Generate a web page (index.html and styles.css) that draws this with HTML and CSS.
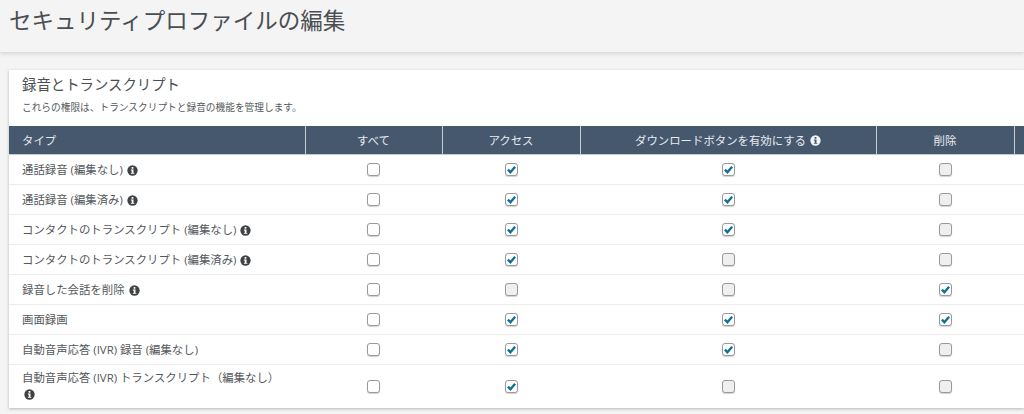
FILE: index.html
```html
<!DOCTYPE html>
<html lang="ja">
<head>
<meta charset="utf-8">
<title>セキュリティプロファイルの編集</title>
<link rel="stylesheet" href="styles.css">
</head>
<body>
<svg class="defs" width="0" height="0" aria-hidden="true">
  <symbol id="info" viewBox="0 0 12 12">
    <circle cx="6" cy="6" r="5.6" fill="#3f4245"/>
    <rect x="4.9" y="2.1" width="2.2" height="2" rx=".5" fill="#fff"/>
    <path d="M4.2 5h2.9v3.6h.9v1H4.2v-1h.9V6h-.9z" fill="#fff"/>
  </symbol>
  <symbol id="info-inv" viewBox="0 0 12 12">
    <circle cx="6" cy="6" r="5.6" fill="#f2f4f6"/>
    <rect x="4.9" y="2.1" width="2.2" height="2" rx=".5" fill="#46586e"/>
    <path d="M4.2 5h2.9v3.6h.9v1H4.2v-1h.9V6h-.9z" fill="#46586e"/>
  </symbol>
  <symbol id="check" viewBox="0 0 14 14">
    <path d="M2.4 7.2 5.6 10.4 11.6 3.4" fill="none" stroke="#0f6f97" stroke-width="3"/>
  </symbol>
</svg>
<header class="page-header"><h1>セキュリティプロファイルの編集</h1></header>
<main class="content">
  <section class="card">
    <h2>録音とトランスクリプト</h2>
    <p class="desc">これらの権限は、トランスクリプトと録音の機能を管理します。</p>
    <table class="perm">
      <colgroup>
        <col class="c-type"><col class="c-all"><col class="c-acc"><col class="c-dl"><col class="c-del"><col class="c-more">
      </colgroup>
      <thead>
        <tr>
          <th class="left">タイプ</th>
          <th>すべて</th>
          <th>アクセス</th>
          <th>ダウンロードボタンを有効にする <svg class="info"><use href="#info-inv"/></svg></th>
          <th>削除</th>
          <th></th>
        </tr>
      </thead>
      <tbody>
        <tr>
          <td class="left">通話録音 (編集なし) <svg class="info"><use href="#info"/></svg></td>
          <td><span class="cb"></span></td>
          <td><span class="cb"><svg><use href="#check"/></svg></span></td>
          <td><span class="cb"><svg><use href="#check"/></svg></span></td>
          <td><span class="cb off"></span></td>
          <td></td>
        </tr>
        <tr>
          <td class="left">通話録音 (編集済み) <svg class="info"><use href="#info"/></svg></td>
          <td><span class="cb"></span></td>
          <td><span class="cb"><svg><use href="#check"/></svg></span></td>
          <td><span class="cb"><svg><use href="#check"/></svg></span></td>
          <td><span class="cb off"></span></td>
          <td></td>
        </tr>
        <tr>
          <td class="left">コンタクトのトランスクリプト (編集なし) <svg class="info"><use href="#info"/></svg></td>
          <td><span class="cb"></span></td>
          <td><span class="cb"><svg><use href="#check"/></svg></span></td>
          <td><span class="cb"><svg><use href="#check"/></svg></span></td>
          <td><span class="cb off"></span></td>
          <td></td>
        </tr>
        <tr>
          <td class="left">コンタクトのトランスクリプト (編集済み) <svg class="info"><use href="#info"/></svg></td>
          <td><span class="cb"></span></td>
          <td><span class="cb"><svg><use href="#check"/></svg></span></td>
          <td><span class="cb off"></span></td>
          <td><span class="cb off"></span></td>
          <td></td>
        </tr>
        <tr>
          <td class="left">録音した会話を削除 <svg class="info wide"><use href="#info"/></svg></td>
          <td><span class="cb"></span></td>
          <td><span class="cb off"></span></td>
          <td><span class="cb off"></span></td>
          <td><span class="cb"><svg><use href="#check"/></svg></span></td>
          <td></td>
        </tr>
        <tr>
          <td class="left">画面録画</td>
          <td><span class="cb"></span></td>
          <td><span class="cb"><svg><use href="#check"/></svg></span></td>
          <td><span class="cb"><svg><use href="#check"/></svg></span></td>
          <td><span class="cb"><svg><use href="#check"/></svg></span></td>
          <td></td>
        </tr>
        <tr>
          <td class="left">自動音声応答 (IVR) 録音 (編集なし)</td>
          <td><span class="cb"></span></td>
          <td><span class="cb"><svg><use href="#check"/></svg></span></td>
          <td><span class="cb"><svg><use href="#check"/></svg></span></td>
          <td><span class="cb off"></span></td>
          <td></td>
        </tr>
        <tr class="tall">
          <td class="left">自動音声応答 (IVR) トランスクリプト（編集なし） <svg class="info"><use href="#info"/></svg></td>
          <td><span class="cb"></span></td>
          <td><span class="cb"><svg><use href="#check"/></svg></span></td>
          <td><span class="cb off"></span></td>
          <td><span class="cb off"></span></td>
          <td></td>
        </tr>
      </tbody>
    </table>
  </section>
</main>
</body>
</html>
```
FILE: styles.css
```css
* { box-sizing: border-box; }
html, body { margin: 0; height: 100%; }
body {
  width: 1024px;
  height: 414px;
  overflow: hidden;
  background: #f4f4f4;
  color: #54585c;
  font-family: "Open Sans", "Noto Sans CJK JP", sans-serif;
}
.defs { display: block; width: 0; height: 0; }
.page-header {
  height: 52px;
  padding: 7px 9px 0;
  background: #f4f4f4;
  box-shadow: 0 2px 4px rgba(0, 0, 0, .12);
}
.page-header h1 {
  margin: 0;
  font-size: 22.5px;
  line-height: 28px;
  font-weight: 400;
  color: #4a4e52;
}
.content { padding: 18px 0 0 9px; }
.card {
  width: 1015px;
  background: #fff;
  box-shadow: 0 1px 3px rgba(0, 0, 0, .25);
  overflow: hidden;
}
.card h2 {
  margin: 0;
  padding: 5px 13px 0;
  font-size: 14.4px;
  line-height: 20px;
  font-weight: 400;
  color: #4a4e52;
}
.desc {
  margin: 0;
  padding: 6px 13px 0;
  height: 31px;
  font-size: 9.7px;
  line-height: 14px;
  color: #54585c;
}
.perm {
  width: 1015px;
  table-layout: fixed;
  border-collapse: collapse;
  font-size: 11.4px;
}
.c-type { width: 296px; }
.c-all { width: 137px; }
.c-acc { width: 138px; }
.c-dl { width: 296px; }
.c-del { width: 138px; }
.c-more { width: 10px; }
.perm th {
  height: 28px;
  padding: 0 4px;
  background: #46586e;
  border-left: 1px solid #c6ccd4;
  border-bottom: 1px solid #c6ccd4;
  color: #e8ebee;
  font-weight: 400;
  text-align: center;
}
.perm th:first-child { border-left: 0; }
.perm td {
  height: 30px;
  padding: 0 4px;
  border-bottom: 1px solid #ececec;
  text-align: center;
  vertical-align: middle;
}
.perm .left { padding-left: 13px; text-align: left; }
.perm .tall td { height: 44px; border-bottom: 0; }
.perm .tall td.left { line-height: 16px; padding-right: 24px; }
.info {
  display: inline-block;
  width: 11px;
  height: 11px;
  margin-left: 1px;
  vertical-align: -1.5px;
}
.info.wide { margin-left: 2px; }
.tall .info { margin-left: 2px; }
.cb {
  display: inline-block;
  width: 13px;
  height: 13px;
  margin-bottom: 1px;
  border: 1px solid #9a9a9a;
  border-radius: 3px;
  background: #fff;
  box-shadow: 0 1px 1px rgba(0, 0, 0, .18);
  vertical-align: middle;
}
.cb.off { background: #efefef; }
.cb svg { display: block; width: 11px; height: 11px; }
```
